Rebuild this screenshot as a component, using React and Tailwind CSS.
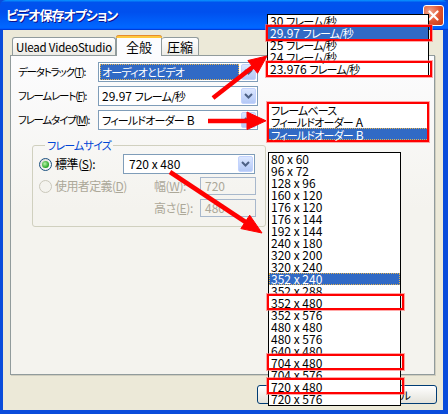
import React from "react";

const sizes = [
  "80 x 60", "96 x 72", "128 x 96", "160 x 120", "176 x 120", "176 x 144",
  "192 x 144", "240 x 180", "320 x 200", "320 x 240", "352 x 240", "352 x 288",
  "352 x 480", "352 x 576", "480 x 480", "480 x 576", "640 x 480", "704 x 480",
  "704 x 576", "720 x 480", "720 x 576",
];
const markedSizes = ["352 x 480", "704 x 480", "720 x 480"];
const rates = ["30", "29.97", "25", "24", "23.976"];

function ComboBtn() {
  return (
    <div className="w-[15px] h-full shrink-0 rounded-[2px] border border-[#C3D3FD] bg-gradient-to-b from-[#DCE7FF] to-[#B3C8F6] flex items-center justify-center">
      <svg width="9" height="6" viewBox="0 0 9 6">
        <polyline points="1,1 4.5,4.5 8,1" fill="none" stroke="#4D6185" strokeWidth="2" />
      </svg>
    </div>
  );
}

function RedBox({ pos }) {
  return <span className={`absolute pointer-events-none border-2 border-[#F00] shadow-[0_0_0_1px_rgba(255,110,110,0.6)] ${pos}`} />;
}

// narrow Japanese run, close to the old UI Gothic widths
function Jp({ children }) {
  return <span className="text-[11px] tracking-[-0.8px]">{children}</span>;
}

export default function App() {
  return (
    <div className="relative w-[448px] h-[414px] overflow-hidden bg-[#0A4CDB] flex flex-col font-['Noto_Sans_CJK_JP','Noto_Sans',sans-serif] text-[12px] leading-[14px] text-black [font-feature-settings:'palt']">
      {/* Title bar */}
      <div className="h-[30px] shrink-0 flex items-center pl-[6px] pr-[4px] rounded-t-[6px] bg-[linear-gradient(#0997FF,#0053EE_8%,#0050EE_40%,#0066FF_88%,#0066FF_93%,#005BFF_95%,#003DD7_96%,#003DD7)]">
        <span className="text-white font-bold text-[13px] tracking-[-1px] [text-shadow:1px_1px_#0F1089] whitespace-nowrap">ビデオ保存オプション</span>
        <div className="ml-auto w-[21px] h-[21px] rounded-[3px] border border-white bg-[radial-gradient(circle_at_30%_30%,#F2A58C,#E0522E_55%,#C23A18)] flex items-center justify-center">
          <svg width="11" height="11" viewBox="0 0 11 11">
            <path d="M1.5 1.5 L9.5 9.5 M9.5 1.5 L1.5 9.5" stroke="white" strokeWidth="2.2" strokeLinecap="round" />
          </svg>
        </div>
      </div>

      {/* Body */}
      <div className="flex-1 ml-[3px] mr-[5px] mb-[4px] bg-[#ECE9D8] flex flex-col">
        <div className="ml-[7px] mr-[8px] mt-[5px] flex flex-col">
          {/* Tabs */}
          <div className="flex items-end h-[20px] pl-[2px]">
            <div className="h-[18px] w-[104px] border border-b-0 border-[#919B9C] rounded-t-[3px] bg-gradient-to-b from-white to-[#ECEBE6] flex items-center justify-center text-[11.5px] tracking-[-0.2px] whitespace-nowrap">
              Ulead VideoStudio
            </div>
            <div className="relative z-10 h-[21px] -mb-[1px] w-[46px] border-x border-[#919B9C] rounded-t-[3px] bg-[#FCFCFE] flex flex-col">
              <div className="h-[3px] -mx-[1px] rounded-t-[3px] bg-[#FFC83C] border-t border-[#E68B2C]" />
              <div className="flex-1 flex items-center justify-center text-[13px]">全般</div>
            </div>
            <div className="h-[18px] w-[37px] border border-b-0 border-l-0 border-[#919B9C] rounded-t-[3px] bg-gradient-to-b from-white to-[#ECEBE6] flex items-center justify-center text-[13px]">
              圧縮
            </div>
          </div>

          {/* Panel */}
          <div className="h-[320px] border border-[#919B9C] bg-[linear-gradient(#FCFCFE,#F4F3EE_48%)] shadow-[1px_1px_0_#D0CEBF] pt-[6px] pl-[7px] flex flex-col gap-[4px]">
            <div className="flex items-center h-[20px]">
              <span className="w-[80px] shrink-0 whitespace-nowrap text-[10.5px] tracking-[-1.2px]">データトラック(<u>T</u>):</span>
              <div className="flex h-[20px] w-[160px] border border-[#7F9DB9] bg-white p-[1px]">
                <div className="flex-1 mr-[2px] bg-[#316AC5] border border-dotted border-[#E0B050] text-white flex items-center pl-[1px] whitespace-nowrap">
                  <Jp>オーディオとビデオ</Jp>
                </div>
                <ComboBtn />
              </div>
            </div>
            <div className="flex items-center h-[20px]">
              <span className="w-[80px] shrink-0 whitespace-nowrap text-[10.5px] tracking-[-1.2px]">フレームレート(<u>F</u>):</span>
              <div className="flex h-[20px] w-[160px] border border-[#7F9DB9] bg-white p-[1px]">
                <div className="flex-1 flex items-center pl-[2px] whitespace-nowrap">29.97&nbsp;<Jp>フレーム/秒</Jp></div>
                <ComboBtn />
              </div>
            </div>
            <div className="flex items-center h-[20px]">
              <span className="w-[80px] shrink-0 whitespace-nowrap text-[10.5px] tracking-[-1.2px]">フレームタイプ(<u>M</u>):</span>
              <div className="flex h-[20px] w-[160px] border border-[#7F9DB9] bg-white p-[1px]">
                <div className="flex-1 flex items-center pl-[2px] whitespace-nowrap"><Jp>フィールドオーダー</Jp>&nbsp;B</div>
                <ComboBtn />
              </div>
            </div>

            {/* Frame size group */}
            <fieldset className="mt-[5px] ml-[14px] w-[234px] border border-[#D0D0BF] rounded-[3px] pl-[6px] pt-[3px] pb-[9px] flex flex-col">
              <legend className="ml-[6px] px-[2px] text-[#0046D5] leading-[12px] whitespace-nowrap"><Jp>フレームサイズ</Jp></legend>
              <div className="flex items-center h-[20px]">
                <div className="w-[84px] flex items-center gap-[3px] whitespace-nowrap">
                  <span className="w-[13px] h-[13px] rounded-full border border-[#1C5180] bg-gradient-to-br from-[#DCDCD7] to-white flex items-center justify-center">
                    <span className="w-[7px] h-[7px] rounded-full bg-[radial-gradient(circle_at_40%_40%,#B8F5A8,#21A121_70%)]" />
                  </span>
                  <span className="tracking-[-0.4px]">標準(<u>S</u>):</span>
                </div>
                <div className="flex h-[20px] w-[132px] border border-[#7F9DB9] bg-white p-[1px]">
                  <div className="flex-1 flex items-center pl-[4px]">720 x 480</div>
                  <ComboBtn />
                </div>
              </div>
              <div className="flex items-center h-[18px] mt-[3px] text-[#ACA899] whitespace-nowrap">
                <div className="w-[115px] flex items-center gap-[3px]">
                  <span className="w-[13px] h-[13px] rounded-full border border-[#CAC8BB] bg-[#F4F3EE]" />
                  <span className="tracking-[-0.6px]">使用者定義(<u>D</u>)</span>
                </div>
                <span className="w-[46px] tracking-[-0.4px]">幅(<u>W</u>):</span>
                <div className="w-[56px] h-[18px] border border-[#A8B8CC] flex items-center pl-[4px]">720</div>
              </div>
              <div className="flex items-center h-[18px] mt-[4px] text-[#ACA899] whitespace-nowrap">
                <div className="w-[115px]" />
                <span className="w-[46px] tracking-[-0.4px]">高さ(<u>E</u>):</span>
                <div className="w-[56px] h-[18px] border border-[#A8B8CC] flex items-center pl-[4px]">480</div>
              </div>
            </fieldset>
          </div>
        </div>

        {/* Buttons */}
        <div className="flex justify-end gap-[5px] mt-[10px] mr-[6px]">
          <div className="w-[75px] h-[19px] rounded-[3px] border border-[#003C74] bg-gradient-to-b from-white to-[#E3E2DA] flex items-center justify-center">OK</div>
          <div className="w-[100px] h-[19px] rounded-[3px] border border-[#003C74] bg-gradient-to-b from-white to-[#E3E2DA] flex items-center justify-center"><Jp>キャンセル</Jp></div>
        </div>
      </div>

      {/* Frame rate list */}
      <div className="absolute left-[267px] top-[14px] w-[162px] border border-black bg-white flex flex-col">
        {rates.map((r, i) => (
          <div
            key={r}
            className={`relative h-[12px] leading-[12px] pl-[2px] whitespace-nowrap ${i === 1 ? "bg-[#316AC5] text-white" : ""}`}
          >
            {r}&nbsp;<Jp>フレーム/秒</Jp>
            {(i === 1 || i === 4) && <RedBox pos="-left-[2px] -right-[4px] -top-[2px] -bottom-[2px]" />}
          </div>
        ))}
      </div>

      {/* Frame type list */}
      <div className="absolute left-[267px] top-[102px] w-[162px] border-2 border-[#F00] shadow-[0_0_0_1px_rgba(255,110,110,0.6)] bg-white flex flex-col whitespace-nowrap">
        <div className="h-[12px] leading-[12px] pl-[2px]"><Jp>フレームベース</Jp></div>
        <div className="h-[12px] leading-[12px] pl-[2px]"><Jp>フィールドオーダー</Jp>&nbsp;A</div>
        <div className="h-[12px] leading-[11px] pl-[2px] bg-[#316AC5] text-white border-y border-dotted border-[#E0B050]"><Jp>フィールドオーダー</Jp>&nbsp;B</div>
      </div>

      {/* Frame size list */}
      <div className="absolute left-[268px] top-[152px] w-[133px] border border-black bg-white flex flex-col">
        {sizes.map((s) => (
          <div
            key={s}
            className={`relative h-[12px] leading-[12px] pl-[2px] whitespace-nowrap ${s === "352 x 240" ? "bg-[#316AC5] text-white outline-1 outline-dotted outline-[#E0B050] -outline-offset-1" : ""}`}
          >
            {s}
            {markedSizes.includes(s) && <RedBox pos="-left-[2px] -right-[4px] -top-[3px] -bottom-[1px]" />}
          </div>
        ))}
      </div>

      {/* Arrows */}
      <svg className="absolute left-0 top-0 pointer-events-none" width="448" height="414" viewBox="0 0 448 414">
        <g fill="#F00" stroke="#F00">
          <line x1="213" y1="98" x2="254" y2="66" strokeWidth="4.5" />
          <polygon points="267,56 257.5,73.3 247.9,60.5" strokeWidth="1" />
          <line x1="208" y1="121" x2="250" y2="121" strokeWidth="4.5" />
          <polygon points="247,112 247,129.5 266,120.8" strokeWidth="1" />
          <line x1="170" y1="172" x2="247" y2="223" strokeWidth="4.5" />
          <polygon points="262,233 240.9,228.6 249.7,215.2" strokeWidth="1" />
        </g>
      </svg>
    </div>
  );
}
